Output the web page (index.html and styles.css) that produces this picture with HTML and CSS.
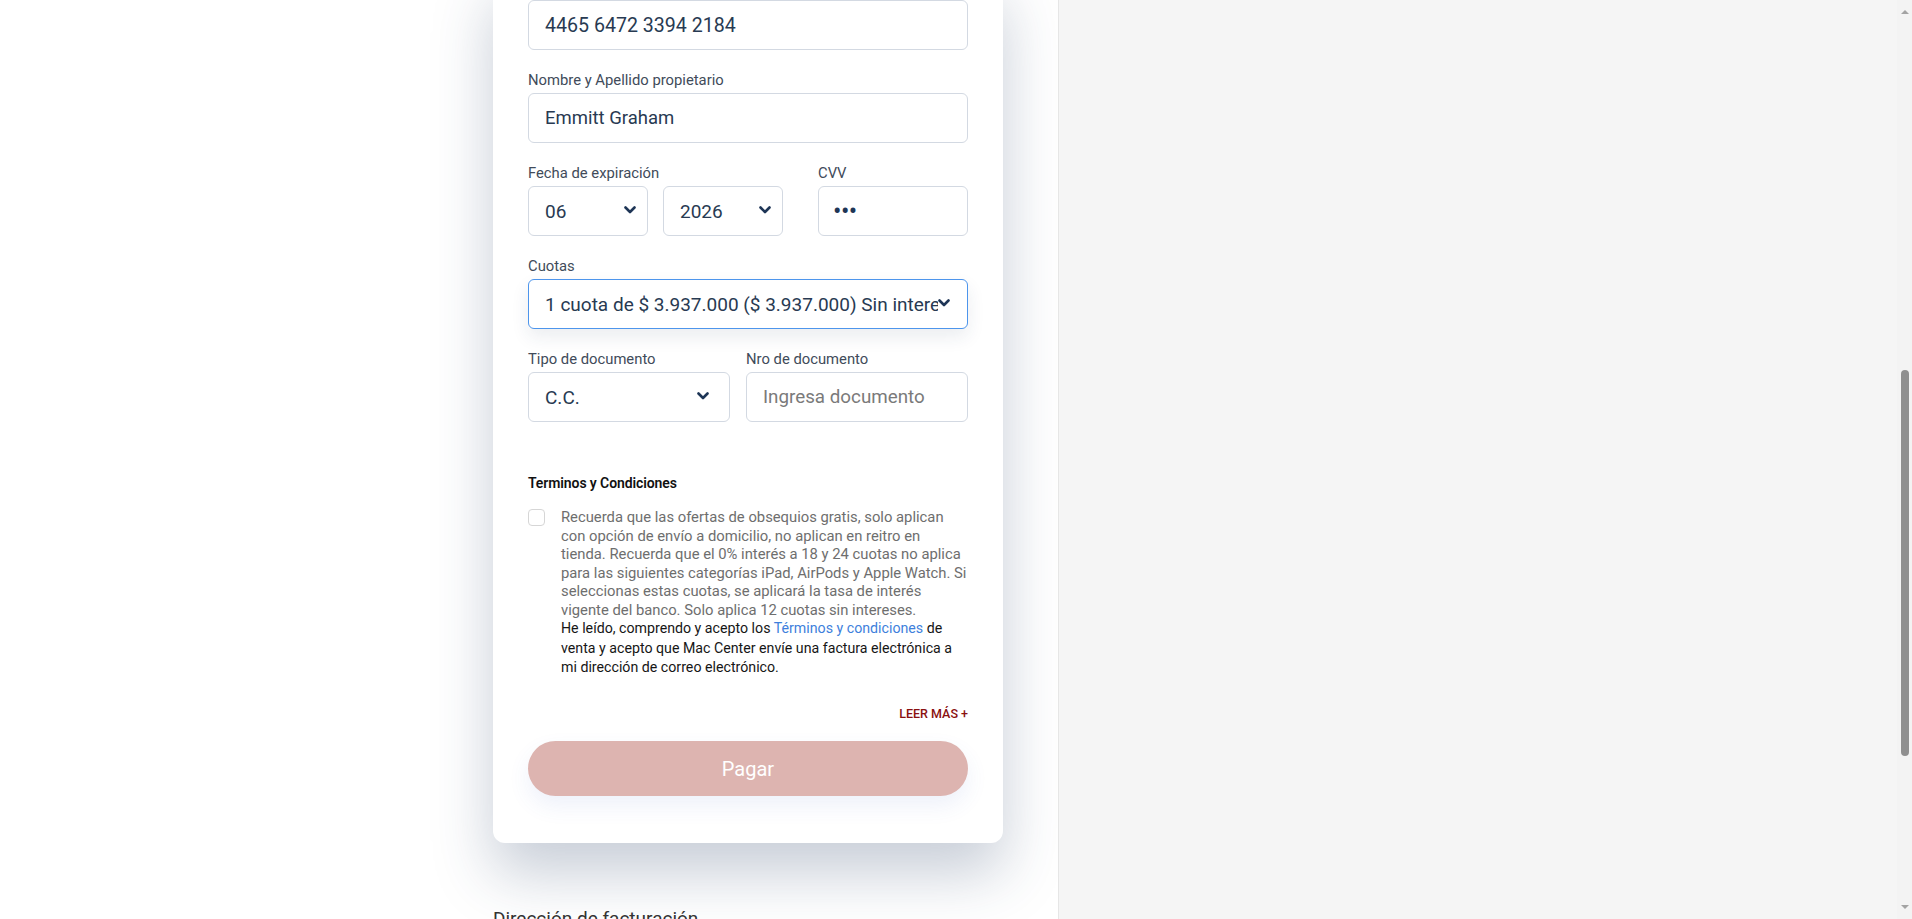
FILE: index.html
```html
<!DOCTYPE html>
<html lang="es">
<head>
<meta charset="utf-8">
<title>Pago</title>
<link rel="stylesheet" href="styles.css">
</head>
<body>
<div class="page">
  <main class="main-col">
    <section class="card">
      <div class="field input num">4465 6472 3394 2184</div>

      <div class="group">
        <div class="label">Nombre y Apellido propietario</div>
        <div class="field input name">Emmitt Graham</div>
      </div>

      <div class="row group">
        <div class="col-exp">
          <div class="label">Fecha de expiración</div>
          <div class="exp-selects">
            <div class="field select sel-small"><span class="val">06</span><svg class="chev" viewBox="0 0 12 8"><path d="M1.5 1.5 6 6l4.5-4.5"/></svg></div>
            <div class="field select sel-small"><span class="val">2026</span><svg class="chev" viewBox="0 0 12 8"><path d="M1.5 1.5 6 6l4.5-4.5"/></svg></div>
          </div>
        </div>
        <div class="col-cvv">
          <div class="label">CVV</div>
          <div class="field input cvv">•••</div>
        </div>
      </div>

      <div class="group">
        <div class="label">Cuotas</div>
        <div class="field select sel-cuotas focus"><span class="val">1 cuota de $ 3.937.000 ($ 3.937.000) Sin intereses</span><svg class="chev" viewBox="0 0 12 8"><path d="M1.5 1.5 6 6l4.5-4.5"/></svg></div>
      </div>

      <div class="row group">
        <div class="col-tipo">
          <div class="label">Tipo de documento</div>
          <div class="field select sel-tipo"><span class="val">C.C.</span><svg class="chev" viewBox="0 0 12 8"><path d="M1.5 1.5 6 6l4.5-4.5"/></svg></div>
        </div>
        <div class="col-nro">
          <div class="label">Nro de documento</div>
          <div class="field input placeholder">Ingresa documento</div>
        </div>
      </div>

      <h3 class="terms-title">Terminos y Condiciones</h3>
      <div class="terms">
        <span class="checkbox"></span>
        <div class="terms-text">
          <p class="note">Recuerda que las ofertas de obsequios gratis, solo aplican<br>con opción de envío a domicilio, no aplican en reitro en<br>tienda. Recuerda que el 0% interés a 18 y 24 cuotas no aplica<br>para las siguientes categorías iPad, AirPods y Apple Watch. Si<br>seleccionas estas cuotas, se aplicará la tasa de interés<br>vigente del banco. Solo aplica 12 cuotas sin intereses.</p>
          <p class="accept">He leído, comprendo y acepto los <a href="#">Términos y condiciones</a> de<br>venta y acepto que Mac Center envíe una factura electrónica a<br>mi dirección de correo electrónico.</p>
        </div>
      </div>
      <div class="more-row"><a class="more" href="#">LEER MÁS +</a></div>
      <button class="pay" type="button">Pagar</button>
    </section>
    <h2 class="billing">Dirección de facturación</h2>
  </main>
  <aside class="side"></aside>
  <div class="scrollbar">
    <span class="arrow up"></span>
    <span class="thumb"></span>
    <span class="arrow down"></span>
  </div>
</div>
</body>
</html>
```
FILE: styles.css
```css
html, body {
  margin: 0;
  height: 100%;
  overflow: hidden;
  background: #ffffff;
  font-family: Roboto, "Liberation Sans", Arial, sans-serif;
}

.page {
  display: flex;
  height: 919px;
  overflow: hidden;
}

.main-col {
  width: 1058px;
  flex: none;
  padding-left: 493px;
  box-sizing: border-box;
  background: #ffffff;
}

.card {
  width: 510px;
  box-sizing: border-box;
  margin-top: -30px;
  padding: 30px 35px 46.6px;
  background: #ffffff;
  border-radius: 12px;
  box-shadow: 0 30px 60px rgba(40, 60, 100, 0.26);
}

.group {
  margin-top: 20.5px;
}

.label {
  font-size: 14.8px;
  line-height: 18px;
  color: #414b5a;
  margin-bottom: 4.5px;
  white-space: nowrap;
}

.field {
  height: 50px;
  box-sizing: border-box;
  border: 1px solid #d3d9e2;
  border-radius: 6px;
  background: #fff;
  display: flex;
  align-items: center;
  padding: 0 16px;
  font-size: 19px;
  color: #283a52;
  position: relative;
}

.field.num { font-size: 19.6px; }
.field.name { font-size: 18.5px; }

.field.placeholder {
  color: #7a7a7a;
  font-size: 18.8px;
}

.field.cvv {
  font-size: 25px;
  letter-spacing: -0.5px;
  color: #1e3556;
  padding-left: 14px;
  padding-top: 1px;
}

.select .val {
  flex: 1;
  overflow: hidden;
  white-space: nowrap;
}

.chev {
  width: 12px;
  height: 8px;
  flex: none;
  fill: none;
  stroke: #1e3556;
  stroke-width: 2.6;
  stroke-linecap: round;
  stroke-linejoin: round;
  margin-top: -2px;
}

.sel-small { width: 120px; padding-right: 11px; }
.sel-tipo { padding-right: 20px; }
.sel-cuotas { padding-right: 17px; }

.field.focus {
  border-color: #4d95ec;
  box-shadow: 0 8px 18px rgba(30, 50, 90, 0.09);
}

.row {
  display: flex;
}

.col-exp { width: 255px; }
.col-cvv { width: 150px; margin-left: 35px; }
.exp-selects { display: flex; gap: 15px; }

.col-tipo { width: 202px; }
.col-nro { width: 222px; margin-left: 16px; }

.terms-title {
  margin: 52px 0 0;
  font-size: 14px;
  line-height: 18px;
  font-weight: 600;
  color: #111;
  letter-spacing: -0.1px;
}

.terms {
  display: flex;
  gap: 16px;
  margin-top: 16px;
}

.checkbox {
  width: 17px;
  height: 17px;
  flex: none;
  box-sizing: border-box;
  border: 1px solid #d6d6d6;
  border-radius: 4px;
  margin-top: 1px;
  background: #fff;
}

.terms-text {
  flex: 1;
  white-space: nowrap;
}

.note {
  margin: 0;
  font-size: 14.8px;
  line-height: 18.5px;
  color: #6e6e6e;
}

.accept {
  margin: 0;
  font-size: 14.2px;
  line-height: 19.5px;
  color: #161616;
}

.accept a {
  color: #3e7fdc;
  text-decoration: none;
}

.more-row {
  display: flex;
  justify-content: flex-end;
  margin-top: 28px;
}

.more {
  font-size: 12.5px;
  line-height: 16px;
  font-weight: 500;
  color: #8a1010;
  text-decoration: none;
}

.pay {
  display: block;
  width: 100%;
  height: 55px;
  margin-top: 19.6px;
  border: none;
  border-radius: 28px;
  background: #ddb4b0;
  color: #ffffff;
  font-family: inherit;
  font-size: 20px;
  box-shadow: 0 10px 22px rgba(70, 100, 200, 0.09);
}

.billing {
  margin: 64px 0 0;
  font-size: 19px;
  line-height: 24px;
  font-weight: 400;
  color: #333;
}

.side {
  flex: 1;
  background: #f5f5f5;
  border-left: 1px solid #e6e6e6;
}

.scrollbar {
  width: 15px;
  flex: none;
  background: #f3f3f3;
  display: flex;
  flex-direction: column;
  align-items: center;
}

.arrow {
  width: 0;
  height: 0;
  border-left: 4px solid transparent;
  border-right: 4px solid transparent;
}

.arrow.up {
  margin-top: 10px;
  border-bottom: 4px solid #a3a3a3;
}

.thumb {
  width: 8px;
  height: 386px;
  margin-top: 356px;
  border-radius: 4px;
  background: #8f8f8f;
}

.arrow.down {
  margin-top: auto;
  margin-bottom: 10px;
  border-top: 4px solid #a3a3a3;
}
```
